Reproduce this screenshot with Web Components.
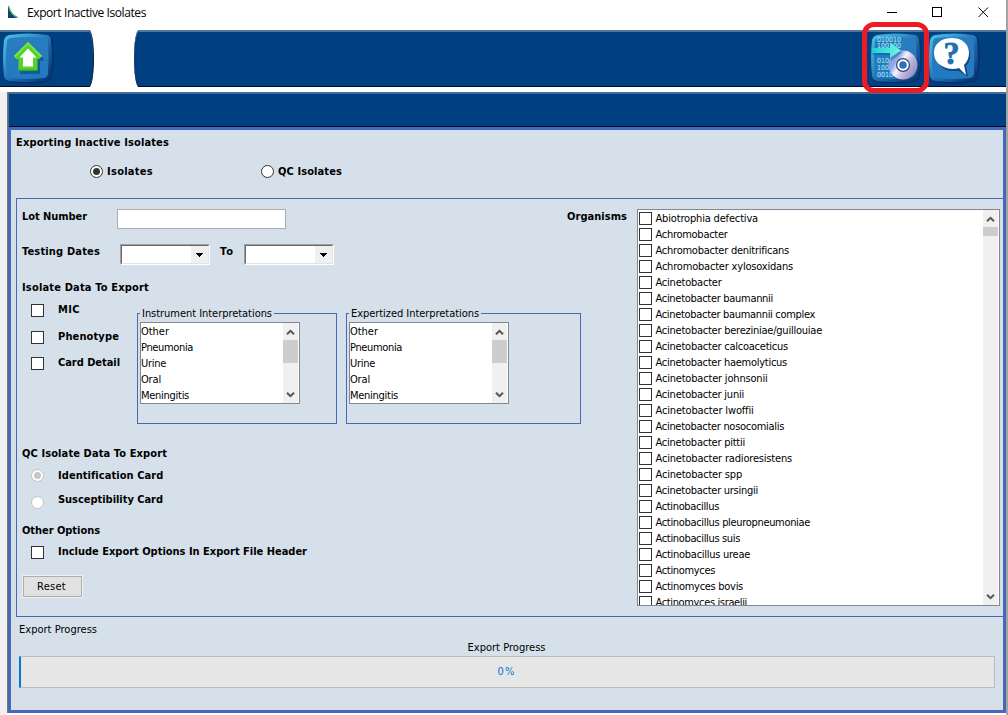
<!DOCTYPE html>
<html lang="en">
<head>
<meta charset="utf-8">
<title>Export Inactive Isolates</title>
<style>
  html, body { margin: 0; height: 100%; }
  body {
    width: 1008px;
    height: 715px;
    overflow: hidden;
    background: #fff;
    color: #000;
    font: 11px/16px "DejaVu Sans Condensed", "DejaVu Sans", sans-serif;
  }
</style>
</head>
<body>
<export-window></export-window>

<script>
// [name, text width]
const SITES = [["Other", 28], ["Pneumonia", 52], ["Urine", 25], ["Oral", 20], ["Meningitis", 48]];
const ORGANISMS = [
  ["Abiotrophia defectiva", 102.5],
  ["Achromobacter", 72],
  ["Achromobacter denitrificans", 133.5],
  ["Achromobacter xylosoxidans", 137.5],
  ["Acinetobacter", 66],
  ["Acinetobacter baumannii", 117.5],
  ["Acinetobacter baumannii complex", 159.5],
  ["Acinetobacter bereziniae/guillouiae", 166.5],
  ["Acinetobacter calcoaceticus", 132.5],
  ["Acinetobacter haemolyticus", 131.5],
  ["Acinetobacter johnsonii", 112],
  ["Acinetobacter junii", 88.5],
  ["Acinetobacter lwoffii", 98],
  ["Acinetobacter nosocomialis", 128.5],
  ["Acinetobacter pittii", 89.5],
  ["Acinetobacter radioresistens", 136.5],
  ["Acinetobacter spp", 86.5],
  ["Acinetobacter ursingii", 102.5],
  ["Actinobacillus", 63.5],
  ["Actinobacillus pleuropneumoniae", 154.5],
  ["Actinobacillus suis", 84.5],
  ["Actinobacillus ureae", 94.5],
  ["Actinomyces", 59.5],
  ["Actinomyces bovis", 87.5],
  ["Actinomyces israelii", 91.5]
];

function define(name, html, setup) {
  const template = document.createElement("template");
  template.innerHTML = html;

  window.customElements.define(name, class extends HTMLElement {
    constructor() {
      super();
      this._root = this.attachShadow({ mode: "open" });
      this._root.appendChild(template.content.cloneNode(true));
    }

    connectedCallback() {
      if (setup) setup(this, this._root);
    }
  });
}

// text label, "fit" is its width in px
define("ui-label", `
  <style>
    :host { display: block; flex: none; height: 16px; line-height: 18px; white-space: nowrap; }
    :host([bold]) { font-weight: bold; }
    span { display: inline-block; }
  </style>
  <span><slot></slot></span>
`, (host, root) => {
  const fit = Number(host.getAttribute("fit"));
  if (!fit) return;
  const span = root.querySelector("span");
  span.style.letterSpacing = "0";
  const natural = span.getBoundingClientRect().width;
  span.style.letterSpacing = (fit - natural) / host.textContent.length + "px";
});

define("check-box", `
  <style>
    :host { display: block; flex: none; box-sizing: border-box; width: 13px; height: 13px; border: 1px solid #333; background: #fff; }
  </style>
`);

define("radio-button", `
  <style>
    :host {
      display: flex; flex: none; box-sizing: border-box; width: 13px; height: 13px;
      border: 1px solid #333; border-radius: 50%; background: #fff;
      align-items: center; justify-content: center;
    }
    i { display: none; width: 7px; height: 7px; border-radius: 50%; background: #333; }
    :host([checked]) i { display: block; }
    :host([disabled]) { border-color: #bcc2ca; }
    :host([disabled]) i { background: #c6c6c6; }
  </style>
  <i></i>
`);

define("combo-box", `
  <style>
    :host {
      display: flex; flex: none; box-sizing: border-box; width: 90px; height: 21px;
      border: 1px solid; border-color: #a0a0a0 #fff #fff #a0a0a0;
    }
    .inner { flex: 1; display: flex; border: 1px solid; border-color: #696969 #e3e3e3 #e3e3e3 #696969; background: #fff; }
    .drop { margin-left: auto; width: 17px; background: #f0f0f0; display: flex; align-items: center; justify-content: center; }
  </style>
  <div class="inner"><div class="drop">
    <svg width="7" height="4" shape-rendering="crispEdges"><path d="M0 0h7v1h-1v1h-1v1h-1v1h-1v-1h-1v-1h-1v-1h-1z"/></svg>
  </div></div>
`);

define("scroll-bar", `
  <style>
    :host { display: flex; flex: none; flex-direction: column; width: 15px; background: #f0f0f0; }
    svg { display: block; flex: none; }
    .thumb { height: var(--thumb, 23px); background: #cdcdcd; }
    .down { margin-top: auto; }
    path { fill: none; stroke: #555; stroke-width: 2; }
  </style>
  <svg width="15" height="17"><path d="M4 11.3 7.5 7.8 11 11.3"/></svg>
  <div class="thumb"></div>
  <svg class="down" width="15" height="17"><path d="M4 6.7 7.5 10.2 11 6.7"/></svg>
`);

define("list-box", `
  <style>
    :host {
      display: flex; box-sizing: border-box; overflow: hidden;
      border: 1px solid #828790; background: #fff; padding-right: 1px;
    }
    .items { flex: 1; min-width: 0; overflow: hidden; }
    .item { display: flex; height: 16px; }
    check-box { margin: 2px 3.5px 0 1px; }
  </style>
  <div class="items"></div>
  <scroll-bar></scroll-bar>
`, (host, root) => {
  const checks = host.hasAttribute("checks");
  const rows = checks ? ORGANISMS : SITES;
  root.querySelector(".items").innerHTML = rows.map(([name, width]) => `
    <div class="item">
      ${checks ? "<check-box></check-box>" : ""}
      <ui-label fit="${width}">${name}</ui-label>
    </div>`).join("");
});

define("group-box", `
  <style>
    :host { display: block; flex: none; box-sizing: border-box; border: 1px solid var(--line, #4668b9); }
    .legend { display: flex; height: 16px; margin-top: -9px; }
    .legend ::slotted(*) { background: #d6e0ea; padding: 0 2px; }
  </style>
  <div class="legend"><slot name="legend"></slot></div>
  <slot></slot>
`);

define("push-button", `
  <style>
    :host {
      display: flex; box-sizing: border-box; width: 61px; height: 23px; justify-content: center;
      border: 1px solid #f0f0f0; outline: 1px solid #adadad; outline-offset: -2px;
      background: #e1e1e1; padding: 2px 2px 0 0;
    }
  </style>
  <slot></slot>
`);

define("progress-bar", `
  <style>
    :host {
      display: flex; box-sizing: border-box; height: 32px; justify-content: center; padding: 6px 2px 0 0;
      border: 1px solid #bcbcbc; border-left: 2px solid #0078d7; background: #e6e6e6; color: #0078d7;
    }
  </style>
  <slot></slot>
`);

// glossy blue tile behind a toolbar glyph
define("tool-button", `
  <style>
    :host { display: grid; flex: none; width: 50px; height: 50px; }
    svg { display: block; overflow: visible; }
    svg, ::slotted(*) { grid-area: 1 / 1; }
  </style>
  <svg width="50" height="50" viewBox="0 0 50 50">
    <defs>
      <linearGradient id="edge" x1="0" y1="0" x2="1" y2="1">
        <stop offset="0" stop-color="#48c4ea"/><stop offset=".35" stop-color="#3295cf"/>
        <stop offset=".6" stop-color="#1b62a8"/><stop offset="1" stop-color="#062c68"/>
      </linearGradient>
      <linearGradient id="face" x1="0" y1="0" x2="0" y2="1">
        <stop offset="0" stop-color="#2a7dbd"/><stop offset="1" stop-color="#2279c0"/>
      </linearGradient>
    </defs>
    <path fill="#03306b" d="M5 3Q26-1 48 3Q51 5 51 9Q53 26 50 43Q49 49 43 49Q26 52 8 49Q4 48 3 43Z"/>
    <path fill="url(#edge)" d="M7 2Q26-1 45 2Q49 3 49 7Q51 25 49 43Q48 48 43 48Q25 50 7 48Q3 47 2 43Q0 25 2 7Q3 3 7 2Z"/>
    <path fill="url(#face)" d="M8 5Q25 3 43 5Q46 5 46 9Q47 25 46 41Q45 45 41 45Q25 47 9 45Q6 44 5 41Q3 25 5 9Q5 6 8 5Z"/>
  </svg>
  <slot></slot>
`);

define("home-icon", `
  <style>:host { display: block; } svg { display: block; }</style>
  <svg width="50" height="50">
    <path fill="#0f4f8c" opacity=".7" d="M27 12 42 26 41 28H38V41H19L17 38Z"/>
    <path fill="#56d42c" d="M26 9 40 23 37 26H35.500V38H16.500V26H14L12 23Z"/>
    <path fill="#7bea50" d="M26 9 12 23 13.500 24 26 11 38.500 24 40 23Z"/>
    <path fill="#38a91a" d="M16.500 36.500H35.500V38H16.500z"/>
    <path fill="#fff" d="M26 15.500 34.500 24.500H31V33.500H21V24.500H17.500Z"/>
  </svg>
`);

define("export-icon", `
  <style>
    :host { display: block; }
    svg { display: block; }
    text { font: 7px "DejaVu Sans Condensed", sans-serif; fill: #aef3f5; }
  </style>
  <svg width="50" height="50">
    <defs>
      <linearGradient id="disc" x1="0" y1=".2" x2="1" y2=".8">
        <stop offset="0" stop-color="#9d9cc9"/><stop offset=".25" stop-color="#89a7ee"/>
        <stop offset=".42" stop-color="#f3f3ff"/><stop offset=".62" stop-color="#c1bce0"/>
        <stop offset="1" stop-color="#8583bb"/>
      </linearGradient>
      <linearGradient id="arrow" x1="0" x2="1">
        <stop offset="0" stop-color="#18cfd3"/><stop offset="1" stop-color="#75f8df"/>
      </linearGradient>
    </defs>
    <text x="7" y="8.500" textLength="24">010010</text>
    <text x="7" y="15" textLength="24">100100</text>
    <text x="7" y="30" textLength="12">010</text>
    <text x="7" y="37" textLength="12">100</text>
    <text x="7" y="43.500" textLength="16">0010</text>
    <circle cx="34.500" cy="33.500" r="14.500" fill="#0b3f80" opacity=".7"/>
    <circle cx="33" cy="32" r="14.500" fill="url(#disc)"/>
    <circle cx="33" cy="32" r="6" fill="#2774b7" stroke="#3b3e70" stroke-width="2"/>
    <circle cx="33" cy="32" r="4.800" fill="#2774b7" stroke="#fff" stroke-width="2"/>
    <path d="M3 18H21V11L32 19.500 21 28V22H3Z" fill="#0b5797" opacity=".45"/>
    <path d="M2 15H20V9.500L31 17.500 20 25V20H2Z" fill="url(#arrow)"/>
  </svg>
`);

define("help-icon", `
  <style>
    :host { display: block; }
    svg { display: block; }
    text { font: bold 32px "Liberation Serif", serif; fill: #1d70b1; stroke: #1d70b1; stroke-width: .8; }
  </style>
  <svg width="50" height="50">
    <path fill="#08386f" opacity=".7" d="M25 7C15 7 8 13 8 22C8 32 16 38 25 38L31 38 40 44 38 33C41 30 42 27 42 22C42 13 35 7 25 7Z"/>
    <path fill="#fff" d="M24 5C13 5 6 11 6 20C6 29 13 35 24 36Q29 36 31 35L38 42 36 32C39 29 41 25 41 20C41 11 34 5 24 5Z"/>
    <text x="15.500" y="31">?</text>
  </svg>
`);

define("title-bar", `
  <style>
    :host { display: flex; height: 30px; background: #fff; font: 12px/26px "Open Sans", sans-serif; }
    .logo { margin: 6px 9px 0 8px; }
    ui-label { margin-top: 4px; }
    .controls { margin-left: auto; display: block; }
  </style>
  <svg class="logo" width="10" height="13">
    <path fill="#173a78" d="M0 0V12H10Q3 10 0 0Z"/>
    <path fill="none" stroke="#39a86b" stroke-width="1.300" d="M.5 0Q2.500 8.500 9.500 11.700"/>
  </svg>
  <ui-label fit="119">Export Inactive Isolates</ui-label>
  <svg class="controls" width="130" height="30" fill="none" stroke="#000">
    <path d="M11 12.500h10M56.500 7.500h9v9h-9z" shape-rendering="crispEdges"/>
    <path d="M102.500 7.500l9.500 9.500M112 7.500l-9.500 9.500"/>
  </svg>
`);

define("nav-bar", `
  <style>
    :host { display: flex; height: 57px; gap: 40px; margin-bottom: 5px; }
    .left, .right { box-sizing: border-box; background: #004080; box-shadow: inset 0 2px #51779f, inset 0 -1px #020c1c; display: flex; padding-top: 3px; }
    .left { width: 94px; border-radius: 0 5px 5px 0 / 0 29px 29px 0; padding-left: 2px; border-right: 1px solid #00244f; }
    .right { flex: 1; border-radius: 5px 0 0 5px / 29px 0 0 29px; justify-content: flex-end; padding-right: 28px; gap: 8px; }
    /* highlight frame drawn over the export button */
    .mark { position: relative; }
    .mark::after {
      content: ""; position: absolute; left: -8px; top: -11px; width: 57px; height: 61px;
      border: 5px solid #ed1c24; border-radius: 12px;
    }
  </style>
  <div class="left"><tool-button><home-icon></home-icon></tool-button></div>
  <div class="right">
    <div class="mark"><tool-button><export-icon></export-icon></tool-button></div>
    <tool-button><help-icon></help-icon></tool-button>
  </div>
`);

define("export-options", `
  <style>
    :host { display: block; width: 550px; padding-left: 5px; }
    .row { display: flex; align-items: flex-start; }
    .lot { height: 35px; padding-top: 9px; }
    .lot input { box-sizing: border-box; width: 169px; height: 20px; margin: 1px 0 0 30px; padding: 0; border: 1px solid #abadb3; background: #fff; }
    .dates { height: 36px; }
    .dates combo-box { margin-top: 1px; }
    .pick { padding-left: 9px; }
    .pick ui-label { margin-left: 14px; }
    .data { height: 145px; margin-top: 6px; }
    .checks { flex: none; width: 115px; }
    group-box { margin-top: 12px; height: 111px; }
    group-box list-box { margin: 1px 0 0 2px; width: 160px; height: 82px; }
    group-box ui-label { margin-left: 2px; }
    push-button { margin-top: 16px; }
  </style>
  <div class="row lot"><ui-label bold fit="65">Lot Number</ui-label><input></div>
  <div class="row dates">
    <ui-label bold fit="78">Testing Dates</ui-label>
    <combo-box style="margin-left:20px"></combo-box>
    <ui-label bold fit="14" style="margin:0 10px">To</ui-label>
    <combo-box></combo-box>
  </div>
  <ui-label bold fit="127">Isolate Data To Export</ui-label>
  <div class="row data">
    <div class="checks">
      <div class="row pick" style="height:27px"><check-box style="margin-top:3px"></check-box><ui-label bold fit="22">MIC</ui-label></div>
      <div class="row pick" style="height:26px"><check-box style="margin-top:3px"></check-box><ui-label bold fit="61">Phenotype</ui-label></div>
      <div class="row pick"><check-box style="margin-top:3px"></check-box><ui-label bold fit="62">Card Detail</ui-label></div>
    </div>
    <group-box style="width:200px">
      <ui-label slot="legend" fit="130">Instrument Interpretations</ui-label>
      <list-box></list-box>
    </group-box>
    <group-box style="width:235px;margin-left:9px">
      <ui-label slot="legend" fit="128">Expertized Interpretations</ui-label>
      <list-box></list-box>
    </group-box>
  </div>
  <ui-label bold fit="145" style="margin-top:-1px">QC Isolate Data To Export</ui-label>
  <div class="row pick" style="margin-top:6px;height:24px"><radio-button checked disabled style="margin-top:2px"></radio-button><ui-label bold fit="105">Identification Card</ui-label></div>
  <div class="row pick" style="height:31px"><radio-button disabled style="margin-top:5px"></radio-button><ui-label bold fit="105">Susceptibility Card</ui-label></div>
  <ui-label bold fit="78">Other Options</ui-label>
  <div class="row pick" style="margin-top:5px"><check-box style="margin-top:3px"></check-box><ui-label bold fit="249">Include Export Options In Export File Header</ui-label></div>
  <push-button><ui-label fit="29">Reset</ui-label></push-button>
`);

define("export-window", `
  <style>
    :host { display: flex; flex-direction: column; box-sizing: border-box; width: 1008px; height: 715px; border-right: 2px solid #a3a3a3; }
    .side { flex: 1; background: linear-gradient(#f0f0f0, #f0f0f0) 0 0 / 7px 100% no-repeat; }
    .frame { display: flex; flex-direction: column; height: 621px; margin-left: 7px; border-left: 1px solid #777; }
    .banner { flex: none; height: 35px; background: #004080; box-shadow: inset 0 2px #426d9a, inset 1px 0 #426d9a, inset 0 -1px #000c20; }
    .body { flex: 1; border: 3px solid #4668b9; background: #d6e0ea; display: flex; flex-direction: column; }
    .heading { margin: 4px 0 0 5px; }
    .mode { display: flex; margin: 13px 0 0 79px; height: 35px; }
    .mode radio-button { margin: 2px 4px 0 0; }
    .panel { display: flex; height: 417px; margin-left: 5px; border: solid #4668b9; border-width: 1px 0 1px 1px; }
    .organisms { width: 363px; height: 397px; margin: 10px 0 0 10px; --thumb: 9px; }
    .progress { --line: #dcdcdc; height: 79px; margin: 12px 2px 0 3px; }
    .progress progress-bar { margin: 1px 5px 0 4px; }
    .caption { display: flex; justify-content: center; margin: 2px 2px 0 0; }
  </style>
  <title-bar></title-bar>
  <nav-bar></nav-bar>
  <div class="side">
    <div class="frame">
      <div class="banner"></div>
      <div class="body">
        <ui-label class="heading" bold fit="153">Exporting Inactive Isolates</ui-label>
        <div class="mode">
          <radio-button checked></radio-button><ui-label bold fit="46">Isolates</ui-label>
          <radio-button style="margin-left:108px"></radio-button><ui-label bold fit="64">QC Isolates</ui-label>
        </div>
        <div class="panel">
          <export-options></export-options>
          <ui-label bold fit="60" style="margin:9px 0 0 -5px">Organisms</ui-label>
          <list-box class="organisms" checks></list-box>
        </div>
        <group-box class="progress">
          <ui-label slot="legend" fit="78" style="margin-left:2px">Export Progress</ui-label>
          <div class="caption"><ui-label fit="78">Export Progress</ui-label></div>
          <progress-bar><ui-label fit="18">0%</ui-label></progress-bar>
        </group-box>
      </div>
    </div>
  </div>
`);
</script>
</body>
</html>
